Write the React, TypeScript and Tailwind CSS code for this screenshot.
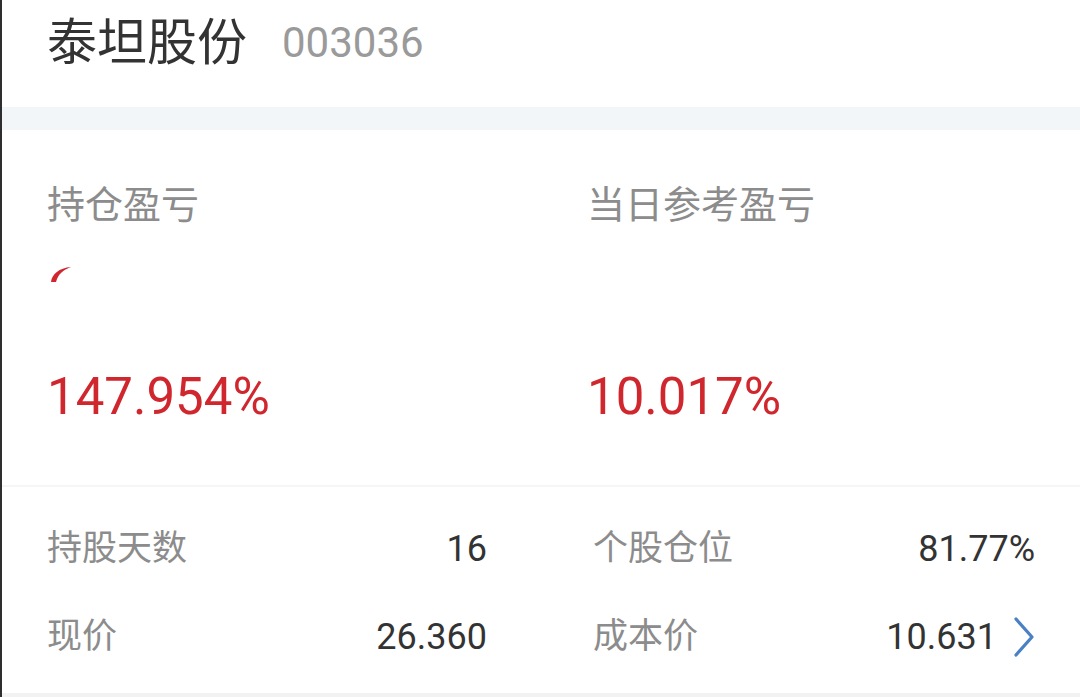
const font = "font-['Roboto','Noto_Sans_CJK_SC',sans-serif]";

const Chevron = () => (
  <svg width="22" height="42" viewBox="0 0 22 42" className="ml-[16px]">
    <polyline points="3,3 19,21 3,39" fill="none" stroke="#4a80c4" strokeWidth="3.2" strokeLinecap="round" strokeLinejoin="round" />
  </svg>
);

const Stat = ({ label, value, speck }: { label: string; value: string; speck?: boolean }) => (
  <div className="flex flex-col">
    <div className="text-[38px] leading-[38px] text-[#8c8c8c]">{label}</div>
    <div className="h-[148px] pt-[40px]">
      {speck && (
        <svg width="24" height="20" viewBox="0 0 24 20" className="ml-[2px]">
          <path d="M2 18 C3 10 10 4 22 3 C14 6 9 10 7 18 Z" fill="#d0272e" />
        </svg>
      )}
    </div>
    <div className="text-[51px] leading-[50px] text-[#d0272e]">{value}</div>
  </div>
);

const Row = ({ label, value, arrow }: { label: string; value: string; arrow?: boolean }) => (
  <div className="h-[88px] flex items-center justify-between">
    <span className="text-[35px] text-[#8c8c8c]">{label}</span>
    <span className="flex items-center text-[36px] text-[#333]">
      {value}
      {arrow && <Chevron />}
    </span>
  </div>
);

const App = () => {
  return (
    <div className={`w-[1080px] h-[697px] bg-white border-l-[2px] border-[#2e2e2e] flex flex-col overflow-hidden ${font}`}>
      <div className="h-[107px] pl-[45px] pt-[18px] flex items-start">
        <div className="flex items-center h-[50px]">
          <span className="text-[50px] leading-[50px] text-[#333]">泰坦股份</span>
          <span className="ml-[35px] text-[42px] leading-[50px] text-[#9a9a9a]">003036</span>
        </div>
      </div>
      <div className="h-[23px] bg-[#f3f6f9]" />
      <div className="grid grid-cols-[540px_1fr] pl-[45px] pt-[56px] pb-[63px]">
        <Stat label="持仓盈亏" value="147.954%" speck />
        <Stat label="当日参考盈亏" value="10.017%" />
      </div>
      <div className="h-[2px] bg-[#f6f6f6]" />
      <div className="grid grid-cols-[440px_442px] gap-x-[106px] pl-[45px] pt-[18px]">
        <div>
          <Row label="持股天数" value="16" />
          <Row label="现价" value="26.360" />
        </div>
        <div>
          <Row label="个股仓位" value="81.77%" />
          <Row label="成本价" value="10.631" arrow />
        </div>
      </div>
      <div className="flex-1" />
      <div className="h-[4px] bg-[#f2f2f2]" />
    </div>
  );
};

export default App;
